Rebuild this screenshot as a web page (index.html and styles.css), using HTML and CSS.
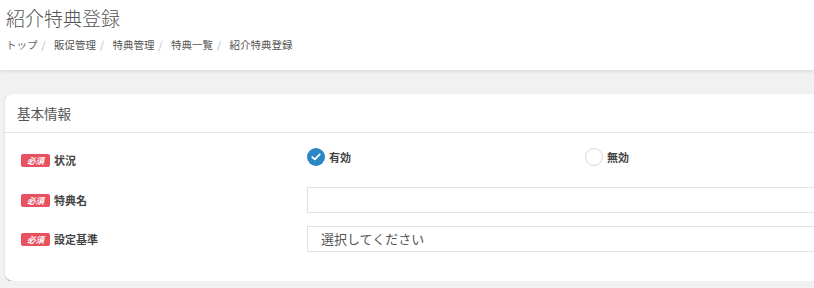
FILE: index.html
```html
<!DOCTYPE html>
<html lang="ja">
<head>
    <meta charset="UTF-8">
    <meta name="viewport" content="width=device-width, initial-scale=1.0">
    <title>紹介特典登録</title>
    <link rel="stylesheet" href="styles.css">
</head>
<body>

<!-- Page header -->
<div class="page-header">
    <h1 class="page-title">紹介特典登録</h1>
    <div class="breadcrumb">
        <a href="#" class="crumb crumb-top">トップ</a><span class="sep">/</span>
        <span class="crumb">販促管理</span><span class="sep">/</span>
        <span class="crumb">特典管理</span><span class="sep">/</span>
        <span class="crumb">特典一覧</span><span class="sep">/</span>
        <span class="crumb">紹介特典登録</span>
    </div>
</div>

<div class="content">
    <div class="card">
        <div class="card-header">基本情報</div>
        <div class="card-body">
            <!-- 状況 -->
            <div class="form-row row-status">
                <div class="form-label"><span class="required">必須</span>状況</div>
                <div class="form-field radios">
                    <label class="radio-item">
                        <span class="radio checked">
                            <svg width="10" height="8" viewBox="0 0 10 8"><path d="M1.3 4.1 L3.8 6.4 L8.7 1.4" fill="none" stroke="#fff" stroke-width="1.9" stroke-linecap="round" stroke-linejoin="round"/></svg>
                        </span>有効
                    </label>
                    <label class="radio-item">
                        <span class="radio"></span>無効
                    </label>
                </div>
            </div>

            <!-- 特典名 -->
            <div class="form-row row-name">
                <div class="form-label"><span class="required">必須</span>特典名</div>
                <div class="form-field">
                    <input type="text" class="text-input">
                </div>
            </div>

            <!-- 設定基準 -->
            <div class="form-row row-basis">
                <div class="form-label"><span class="required">必須</span>設定基準</div>
                <div class="form-field">
                    <div class="select-box">選択してください</div>
                </div>
            </div>
        </div>
    </div>
</div>

</body>
</html>
```

FILE: styles.css
```css
body {
    margin: 0;
    font-family: "Noto Sans CJK JP", "Noto Sans", sans-serif;
    background-color: #f1f1f1;
    color: #555;
    overflow: hidden;
}
.page-header {
    height: 70px;
    padding: 4px 6px 0;
    box-sizing: border-box;
    background-color: #fff;
    box-shadow: 0 1px 4px rgba(0, 0, 0, 0.12);
}
.page-title {
    margin: 0;
    font-size: 19px;
    font-weight: 300;
    line-height: 28px;
    color: #555;
}
.breadcrumb {
    margin-top: 6px;
    font-size: 10.5px;
    line-height: 14px;
    color: #555;
}
.crumb-top {
    color: #6e6570;
    text-decoration: none;
}
.sep {
    color: #bbb;
    padding: 0 6px 0 4px;
}
.content {
    padding: 24px 0 0 5px;
}
.card {
    background-color: #fff;
    border-radius: 8px 0 0 8px;
    box-shadow: 0 2px 1px -1px rgba(0, 0, 0, 0.4), -1px 0 2px rgba(0, 0, 0, 0.06);
}
.card-header {
    height: 38px;
    line-height: 38px;
    padding: 0 12px;
    font-size: 13.5px;
    color: #555;
    border-bottom: 1px solid #e6e6e6;
}
.card-body {
    padding: 12px 0 29px 16px;
}
.form-row {
    display: grid;
    grid-template-columns: 286px 1fr;
    align-items: center;
}
.row-status {
    height: 18px;
    margin-bottom: 24px;
}
.row-name {
    height: 26px;
    margin-bottom: 13px;
}
.row-basis {
    height: 26px;
}
.form-label {
    display: flex;
    align-items: center;
    font-size: 11px;
    font-weight: bold;
    color: #444;
}
.row-status .form-label {
    margin-top: 7px;
}
.required {
    display: inline-block;
    width: 29px;
    height: 13px;
    line-height: 13px;
    margin-right: 4px;
    border-radius: 2px;
    background-color: #e8515f;
    color: #fff;
    font-size: 8.5px;
    font-style: italic;
    text-align: center;
}
.radios {
    display: flex;
}
.radio-item {
    display: flex;
    align-items: center;
    font-size: 11px;
    font-weight: bold;
    color: #444;
}
.radio-item:first-child {
    width: 278px;
}
.radio {
    width: 18px;
    height: 18px;
    margin-right: 4px;
    box-sizing: border-box;
    border: 1px solid #d6d6d6;
    border-radius: 50%;
    display: flex;
    align-items: center;
    justify-content: center;
}
.radio.checked {
    border: none;
    background-color: #2b86c5;
}
.text-input, .select-box {
    display: block;
    width: 100%;
    height: 26px;
    box-sizing: border-box;
    border: 1px solid #e2e2e2;
    border-right: none;
    background-color: #fff;
    margin: 0;
    padding: 0 13px;
    font-family: inherit;
    font-size: 13px;
    line-height: 24px;
    color: #555;
}
```
